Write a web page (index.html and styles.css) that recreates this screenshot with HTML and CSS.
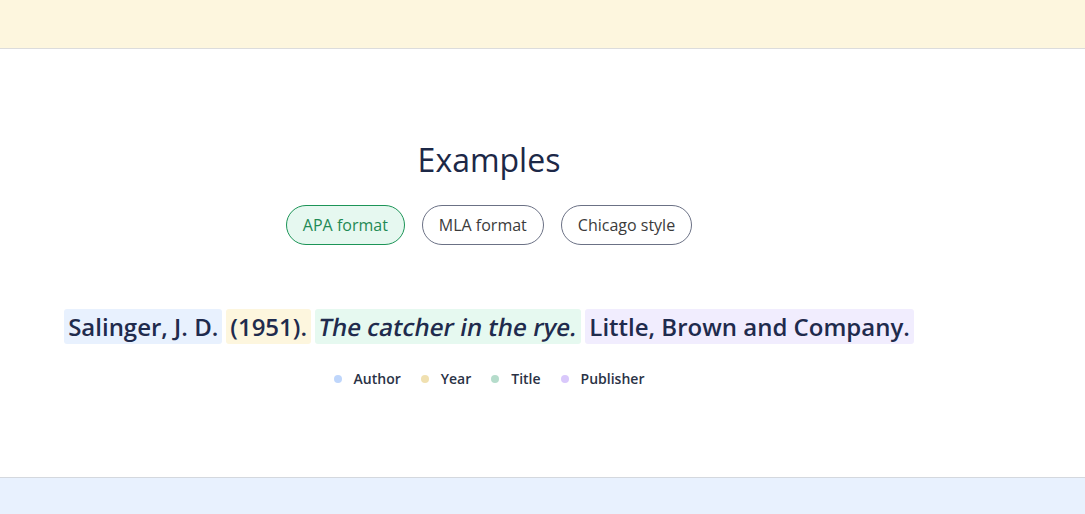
FILE: index.html
```html
<!DOCTYPE html>
<html lang="en">
<head>
  <meta charset="UTF-8" />
  <meta name="viewport" content="width=device-width, initial-scale=1" />
  <title>Citation examples</title>
  <link rel="stylesheet" href="styles.css">
</head>
<body>

  <div class="band band-top"></div>

  <section class="examples">
    <div class="container">
      <h2>Examples</h2>

      <div class="tabs">
        <button class="tab active">APA format</button>
        <button class="tab">MLA format</button>
        <button class="tab">Chicago style</button>
      </div>

      <p class="citation">
        <span class="part author">Salinger, J. D.</span>
        <span class="part year">(1951).</span>
        <span class="part title"><em>The catcher in the rye.</em></span>
        <span class="part publisher">Little, Brown and Company.</span>
      </p>

      <ul class="legend">
        <li><span class="dot author-dot"></span>Author</li>
        <li><span class="dot year-dot"></span>Year</li>
        <li><span class="dot title-dot"></span>Title</li>
        <li><span class="dot publisher-dot"></span>Publisher</li>
      </ul>
    </div>
  </section>

  <div class="band band-bottom"></div>

</body>
</html>
```

FILE: styles.css
```css
body {
  font-family: "Open Sans", "Liberation Sans", sans-serif;
  color: #1c2847;
  background: #fff;
  margin: 0;
}
.band {
  height: 48px;
}
.band-top {
  background: #fdf6de;
  border-bottom: 1px solid #dcdcdc;
}
.band-bottom {
  background: #e8f1fe;
  border-top: 1px solid #d4d8de;
}
.examples {
  height: 428px;
}
.container {
  width: 850px;
  margin-left: 64px;
  padding-top: 90px;
  text-align: center;
}
h2 {
  font-size: 32px;
  font-weight: 400;
  margin: 0;
  line-height: 42px;
}
.tabs {
  display: flex;
  justify-content: center;
  gap: 17px;
  margin-top: 24px;
}
.tab {
  font-family: inherit;
  font-size: 16px;
  color: #3b3b3b;
  background: #fff;
  border: 1px solid #6b7185;
  border-radius: 20px;
  height: 40px;
  padding: 0 16px;
  cursor: pointer;
}
.tab.active {
  background: #e6f8f0;
  border-color: #1c9457;
  color: #1f8a55;
}
.citation {
  display: flex;
  justify-content: center;
  gap: 4px;
  margin: 64px 0 0;
  font-size: 24px;
  font-weight: 600;
  line-height: 35px;
  color: #1f2b4d;
}
.part {
  padding: 0 4px;
  border-radius: 3px;
}
/* slanted upright glyphs, like a synthesized oblique */
.part em {
  display: inline-block;
  font-style: normal;
  transform: skewX(-11deg);
}
.author { background: #e8f1fe; }
.year { background: #fdf6de; }
.title { background: #e6f9f0; }
.publisher { background: #f1edfe; }
.legend {
  list-style: none;
  padding: 0;
  margin: 25px 0 0;
  display: flex;
  justify-content: center;
  gap: 20px;
  font-size: 14px;
  font-weight: 600;
  color: #2a3245;
}
.legend li {
  display: flex;
  align-items: center;
}
.dot {
  width: 8px;
  height: 8px;
  border-radius: 50%;
  margin-right: 12px;
}
.author-dot { background: #bfd6fb; }
.year-dot { background: #f0e0b0; }
.title-dot { background: #b5dccb; }
.publisher-dot { background: #d9c8fb; }
```
